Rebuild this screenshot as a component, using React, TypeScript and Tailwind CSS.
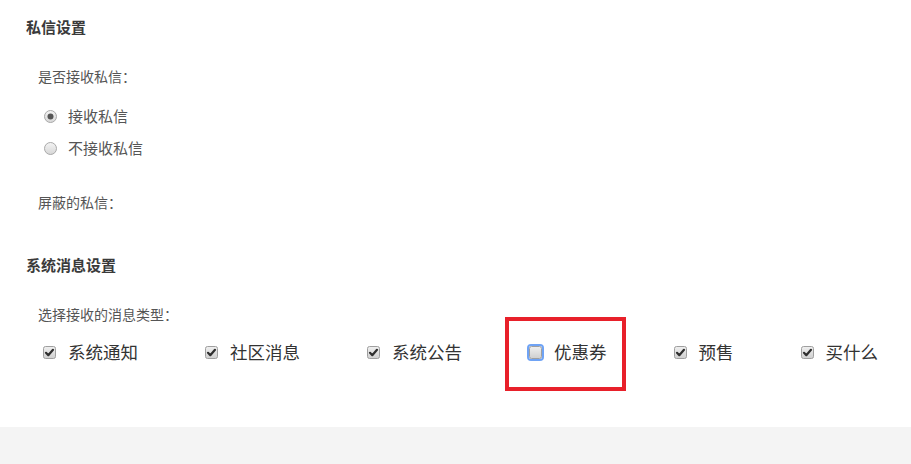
import React from 'react';

const font = { fontFamily: '"Noto Sans CJK SC", "Noto Sans", sans-serif' };

function Radio({ checked }: { checked?: boolean }) {
  return (
    <svg width="13" height="13" viewBox="0 0 13 13" className="shrink-0">
      <defs>
        <linearGradient id={checked ? 'rg1' : 'rg2'} x1="0" y1="0" x2="0" y2="1">
          <stop offset="0" stopColor="#f4f4f4" />
          <stop offset="1" stopColor="#d6d6d6" />
        </linearGradient>
      </defs>
      <circle cx="6.5" cy="6.5" r="6" fill={`url(#${checked ? 'rg1' : 'rg2'})`} stroke="#a9a9a9" />
      {checked && <circle cx="6.5" cy="6.5" r="3" fill="#555" />}
    </svg>
  );
}

function Checkbox({ checked, focused }: { checked?: boolean; focused?: boolean }) {
  return (
    <svg width="13" height="13" viewBox="0 0 13 13" className="shrink-0 overflow-visible">
      <defs>
        <linearGradient id="cbg" x1="0" y1="0" x2="0" y2="1">
          <stop offset="0" stopColor="#f0f0f0" />
          <stop offset="1" stopColor="#cfcfcf" />
        </linearGradient>
      </defs>
      {focused && (
        <rect x="-1" y="-1" width="15" height="15" rx="3" fill="none" stroke="#6fa3f5" strokeWidth="2" />
      )}
      <rect x="0.5" y="0.5" width="12" height="12" rx="2" fill="url(#cbg)" stroke="#9f9f9f" />
      {checked && (
        <path d="M3 6.8 L5.3 9.2 L10 3.8" fill="none" stroke="#2f2f2f" strokeWidth="2.2" strokeLinecap="round" strokeLinejoin="round" />
      )}
    </svg>
  );
}

const types = [
  { label: '系统通知', checked: true },
  { label: '社区消息', checked: true },
  { label: '系统公告', checked: true },
  { label: '优惠券', checked: false, highlight: true },
  { label: '预售', checked: true },
  { label: '买什么', checked: true },
];

export default function App() {
  return (
    <div className="w-[911px] h-[464px] bg-white flex flex-col" style={font}>
      <div className="flex-1 pl-[26px]">
        <div className="pt-[17px] leading-[20px] text-[15px] font-bold text-[#3a3a3a]">私信设置</div>

        <div className="pl-[12px] mt-[29px] leading-[20px] text-[14px] text-[#555]">是否接收私信：</div>

        <div className="pl-[18px] mt-[20px] flex items-center h-[20px] text-[15px] text-[#555]">
          <Radio checked />
          <span className="ml-[11px]">接收私信</span>
        </div>
        <div className="pl-[18px] mt-[12px] flex items-center h-[20px] text-[15px] text-[#555]">
          <Radio />
          <span className="ml-[11px]">不接收私信</span>
        </div>

        <div className="pl-[12px] mt-[34px] leading-[20px] text-[14px] text-[#555]">屏蔽的私信：</div>

        <div className="mt-[43px] leading-[20px] text-[15px] font-bold text-[#3a3a3a]">系统消息设置</div>

        <div className="pl-[12px] mt-[29px] leading-[20px] text-[14px] text-[#555]">选择接收的消息类型：</div>

        <div className="pl-[17px] mt-[16px] flex items-center gap-[67px] h-[24px]">
          {types.map((t) => (
            <div key={t.label} className="relative flex items-center">
              <Checkbox checked={t.checked} focused={t.highlight} />
              <span className="ml-[12px] text-[17.5px] text-[#333] leading-[24px]">{t.label}</span>
              {t.highlight && (
                <div className="absolute left-[-24px] top-[-23px] w-[121px] h-[74px] border-[4px] border-[#e8202a]" />
              )}
            </div>
          ))}
        </div>
      </div>
      <div className="h-[37px] bg-[#f4f4f4]" />
    </div>
  );
}
